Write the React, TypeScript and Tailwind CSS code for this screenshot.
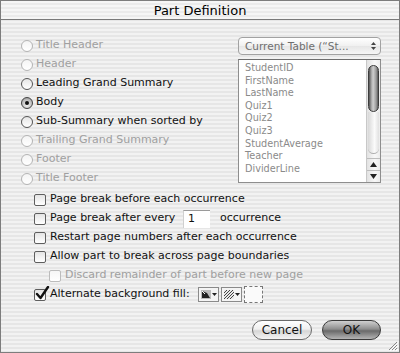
import React from "react";

const font = { fontFamily: '"DejaVu Sans", "Liberation Sans", sans-serif' };

function Radio({ label, disabled, checked }: { label: string; disabled?: boolean; checked?: boolean }) {
  return (
    <div className="flex items-center h-[19px]">
      <span
        className={
          "relative w-[12px] h-[12px] rounded-full border flex items-center justify-center " +
          (checked
            ? "border-[#444] bg-[radial-gradient(circle_at_50%_70%,#f4f4f4_0%,#bdbdbd_60%,#8a8a8a_100%)]"
            : disabled
            ? "border-[#b4b4b4] bg-[linear-gradient(to_bottom,#f4f4f4,#ffffff)]"
            : "border-[#555] bg-[linear-gradient(to_bottom,#e6e6e6,#ffffff)]")
        }
      >
        {checked && <span className="w-[4px] h-[4px] rounded-full bg-[#111]" />}
      </span>
      <span className={"ml-[3px] text-[11px] " + (disabled ? "text-[#a0a0a0]" : "text-[#111]")}>{label}</span>
    </div>
  );
}

function Check({ checked, disabled }: { checked?: boolean; disabled?: boolean }) {
  return (
    <span
      className={
        "relative w-[12px] h-[12px] rounded-[2px] border shrink-0 " +
        (disabled
          ? "border-[#bcbcbc] bg-[linear-gradient(to_bottom,#f6f6f6,#ffffff)]"
          : "border-[#5e5e5e] bg-[linear-gradient(to_bottom,#e4e4e4,#ffffff)]")
      }
    >
      {checked && (
        <svg className="absolute left-[0px] top-[-4px]" width="15" height="15" viewBox="0 0 15 15">
          <path d="M2 8 L5.5 12 L13 1" fill="none" stroke="#111" strokeWidth="2.4" strokeLinecap="round" strokeLinejoin="round" />
        </svg>
      )}
    </span>
  );
}

export default function App() {
  const items = ["StudentID", "FirstName", "LastName", "Quiz1", "Quiz2", "Quiz3", "StudentAverage", "Teacher", "DividerLine"];
  return (
    <div
      className="relative w-[400px] h-[353px] overflow-hidden border border-[#7d7d7d] bg-[image:repeating-linear-gradient(to_bottom,#f2f2f2_0px,#f2f2f2_2px,#e6e6e6_2px,#e6e6e6_4px)]"
      style={font}
    >
      {/* Title bar */}
      <div className="h-[19px] border-b border-[#7a7a7a] flex items-center justify-center bg-[image:repeating-linear-gradient(to_bottom,#f6f6f6_0px,#f6f6f6_2px,#ebebeb_2px,#ebebeb_4px)]">
        <span className="text-[13px] text-black leading-none">Part Definition</span>
      </div>

      {/* Top section */}
      <div className="flex">
        <div className="flex-1 pl-[20px] pt-[16px]">
          <Radio label="Title Header" disabled />
          <Radio label="Header" disabled />
          <Radio label="Leading Grand Summary" />
          <Radio label="Body" checked />
          <Radio label="Sub-Summary when sorted by" />
          <Radio label="Trailing Grand Summary" disabled />
          <Radio label="Footer" disabled />
          <Radio label="Title Footer" disabled />
        </div>
        <div className="w-[143px] mr-[18px] pt-[17px]">
          <div className="h-[18px] rounded-[4px] border border-[#a2a2a2] bg-[linear-gradient(to_bottom,#ffffff,#f0f0f0_50%,#e6e6e6_51%,#f6f6f6)] flex items-center">
            <span className="flex-1 pl-[6px] text-[10.5px] text-[#6e6e6e] leading-none whitespace-nowrap">Current Table (“St...</span>
            <span className="w-[14px] h-full flex flex-col items-center justify-center gap-[2px]">
              <svg width="5" height="3" viewBox="0 0 5 3"><path d="M0 3 L2.5 0 L5 3Z" fill="#444" /></svg>
              <svg width="5" height="3" viewBox="0 0 5 3"><path d="M0 0 L2.5 3 L5 0Z" fill="#444" /></svg>
            </span>
          </div>
          <div className="mt-[4px] h-[124px] border border-[#8e8e8e] border-t-[#6e6e6e] bg-white flex">
            <div className="flex-1 pl-[6px] pt-[2px]">
              {items.map((t) => (
                <div key={t} className="h-[12.6px] leading-[12.6px] text-[9.7px] text-[#8a8a8a] whitespace-nowrap">
                  {t}
                </div>
              ))}
            </div>
            <div className="w-[14px] border-l border-[#c8c8c8] bg-[linear-gradient(to_right,#e2e2e2,#f8f8f8_60%,#ececec)] flex flex-col">
              <div className="mx-[1px] mt-[5px] h-[47px] rounded-full border border-[#3c3c3c] bg-[linear-gradient(to_right,#555,#bdbdbd_35%,#c8c8c8_50%,#9a9a9a_80%,#5a5a5a)]" />
              <div className="mx-[1px] h-[42px] rounded-b-full bg-[linear-gradient(to_right,#d8d8d8,#fbfbfb_60%,#e0e0e0)] border-b border-[#b0b0b0]" />
              <div className="flex-1" />
              <div className="h-[12px] flex items-center justify-center border-t border-[#bdbdbd]">
                <svg width="7" height="5" viewBox="0 0 7 5"><path d="M0 5 L3.5 0 L7 5Z" fill="#222" /></svg>
              </div>
              <div className="h-[12px] flex items-center justify-center border-t border-[#bdbdbd]">
                <svg width="7" height="5" viewBox="0 0 7 5"><path d="M0 0 L3.5 5 L7 0Z" fill="#222" /></svg>
              </div>
            </div>
          </div>
        </div>
      </div>

      {/* Checkboxes */}
      <div className="pl-[33px] pt-[2px] text-[11px] text-[#111]">
        <div className="flex items-center h-[19px]">
          <Check />
          <span className="ml-[4px]">Page break before each occurrence</span>
        </div>
        <div className="flex items-center h-[19px]">
          <Check />
          <span className="ml-[4px] w-[133px]">Page break after every</span>
          <span className="h-[18px] w-[27px] bg-white border-t border-[#9a9a9a] border-l border-l-[#d0d0d0] flex items-center pl-[4px]">1</span>
          <span className="ml-[10px]">occurrence</span>
        </div>
        <div className="flex items-center h-[19px]">
          <Check />
          <span className="ml-[4px]">Restart page numbers after each occurrence</span>
        </div>
        <div className="flex items-center h-[19px]">
          <Check />
          <span className="ml-[4px]">Allow part to break across page boundaries</span>
        </div>
        <div className="flex items-center h-[19px] pl-[15px]">
          <Check disabled />
          <span className="ml-[4px] text-[#a0a0a0]">Discard remainder of part before new page</span>
        </div>
        <div className="flex items-center h-[19px]">
          <Check checked />
          <span className="ml-[4px]">Alternate background fill:</span>
          <div className="ml-[8px] flex items-center gap-[2px]">
            <div className="w-[21px] h-[15px] border border-[#8a8a8a] bg-[#f4f4f4] flex items-center pl-[2px] gap-[1px]">
              <svg width="10" height="9" viewBox="0 0 10 9">
                <rect x="0" y="0" width="10" height="9" fill="#bdbdbd" />
                <path d="M1 1 L6 3 L9 8 L1 8Z" fill="#222" />
                <path d="M1 1 L4 4" stroke="#fff" strokeWidth="1" />
              </svg>
              <svg width="5" height="3" viewBox="0 0 5 3"><path d="M0 0 L2.5 3 L5 0Z" fill="#222" /></svg>
            </div>
            <div className="w-[21px] h-[15px] border border-[#8a8a8a] bg-[#f4f4f4] flex items-center pl-[2px] gap-[1px]">
              <svg width="10" height="9" viewBox="0 0 10 9">
                <rect x="0" y="0" width="10" height="9" fill="#e8e8e8" />
                <path d="M0 3 L3 0 M0 6 L6 0 M0 9 L9 0 M3 9 L10 2 M6 9 L10 5" stroke="#444" strokeWidth="1" />
              </svg>
              <svg width="5" height="3" viewBox="0 0 5 3"><path d="M0 0 L2.5 3 L5 0Z" fill="#222" /></svg>
            </div>
            <div className="w-[19px] h-[17px] border border-dashed border-[#777] bg-[#fafafa]" />
          </div>
        </div>
      </div>

      {/* Buttons */}
      <div className="flex justify-end gap-[10px] pr-[18px] mt-[16px]">
        <div className="w-[60px] h-[20px] rounded-full border border-[#6a6a6a] bg-[linear-gradient(to_bottom,#ffffff,#f0f0f0_45%,#d6d6d6_55%,#f4f4f4)] flex items-center justify-center text-[12px] text-[#111]">
          Cancel
        </div>
        <div className="w-[59px] h-[20px] rounded-full border border-[#3a3a3a] bg-[linear-gradient(to_bottom,#d0d0d0,#8e8e8e_45%,#6a6a6a_55%,#b4b4b4)] flex items-center justify-center text-[12px] text-[#111]">
          OK
        </div>
      </div>

      {/* Resize grip */}
      <svg className="absolute right-[1px] bottom-[1px]" width="11" height="11" viewBox="0 0 11 11">
        <path d="M10 2 L2 10 M10 5 L5 10 M10 8 L8 10" stroke="#888" strokeWidth="1" />
        <path d="M11 3 L3 11 M11 6 L6 11 M11 9 L9 11" stroke="#fff" strokeWidth="1" />
      </svg>
    </div>
  );
}
